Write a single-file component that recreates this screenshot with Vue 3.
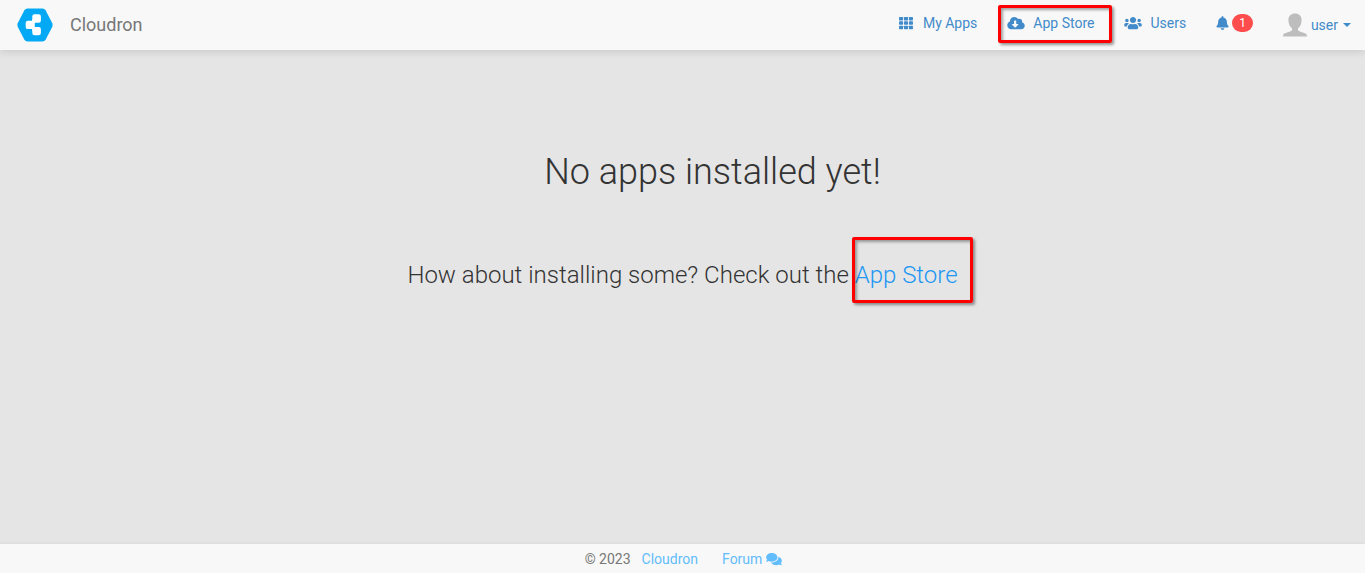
<script setup>
const cells = [0, 1, 2].flatMap((r) => [0, 1, 2].map((c) => ({ x: c * 181, y: 32 + r * 160 })))
</script>

<template>
  <div class="page">
    <header class="navbar">
      <a class="brand" href="#">
        <svg class="logo" viewBox="0 0 36 34" aria-hidden="true">
          <path fill="#03a9f4" d="M10.500 0.500H25.500Q27.500 0.500 28.600 2.200L35.300 15.300Q36 17 35.300 18.700L28.600 31.800Q27.500 33.500 25.500 33.500H10.500Q8.500 33.500 7.400 31.800L0.700 18.700Q0 17 0.700 15.300L7.400 2.200Q8.500 0.500 10.500 0.500Z" />
          <g fill="#fff">
            <rect x="15.300" y="6.300" width="8.600" height="8.400" rx="2.200" />
            <rect x="8.700" y="12.700" width="8.600" height="8.400" rx="2.200" />
            <rect x="15.300" y="18.900" width="8.600" height="8.400" rx="2.200" />
            <path d="M15.300 11H19.500L17.700 14.500V19.500L19.500 23H15.300Z" />
          </g>
        </svg>
        <span>Cloudron</span>
      </a>
      <nav class="menu">
        <a class="item" href="#apps">
          <svg class="icon" viewBox="0 0 512 512" aria-hidden="true">
            <rect v-for="(c, i) in cells" :key="i" :x="c.x" :y="c.y" width="149" height="128" rx="24" />
          </svg>
          <span>My Apps</span>
        </a>
        <a class="item marked" href="#appstore">
          <svg class="icon" viewBox="0 0 640 512" aria-hidden="true">
            <path d="M537.6 226.6c4.100-10.700 6.400-22.400 6.400-34.600 0-53-43-96-96-96-19.700 0-38.100 6-53.300 16.200C367 64.200 315.300 32 256 32c-88.400 0-160 71.600-160 160 0 2.700.1 5.400.2 8.100C40.200 219.800 0 273.200 0 336c0 79.500 64.500 144 144 144h368c70.700 0 128-57.300 128-128 0-61.900-44-113.600-102.400-125.400zm-132.900 88.700L299.300 420.700c-6.200 6.200-16.400 6.200-22.600 0L171.300 315.300c-10.100-10.100-2.900-27.300 11.300-27.300H248V176c0-8.800 7.200-16 16-16h48c8.800 0 16 7.200 16 16v112h65.400c14.200 0 21.400 17.200 11.300 27.300z" />
          </svg>
          <span>App Store</span>
        </a>
        <a class="item" href="#users">
          <svg class="icon" viewBox="0 0 640 512" aria-hidden="true">
            <path d="M96 224c35.300 0 64-28.700 64-64s-28.700-64-64-64-64 28.700-64 64 28.700 64 64 64zm448 0c35.300 0 64-28.700 64-64s-28.700-64-64-64-64 28.700-64 64 28.700 64 64 64zm32 32h-64c-17.600 0-33.500 7.100-45.100 18.600 40.300 22.100 68.900 62 75.100 109.400h66c17.700 0 32-14.300 32-32v-32c0-35.300-28.700-64-64-64zm-256 0c61.900 0 112-50.100 112-112S381.900 32 320 32 208 82.100 208 144s50.100 112 112 112zm76.800 32h-8.300c-20.800 10-43.900 16-68.500 16s-47.600-6-68.500-16h-8.300C179.600 288 128 339.600 128 403.200V432c0 26.500 21.500 48 48 48h288c26.500 0 48-21.500 48-48v-28.800c0-63.600-51.600-115.200-115.200-115.200zm-223.700-13.400C161.500 263.100 145.600 256 128 256H64c-35.300 0-64 28.700-64 64v32c0 17.700 14.300 32 32 32h65.900c6.300-47.400 34.900-87.300 75.200-109.400z" />
          </svg>
          <span>Users</span>
        </a>
        <a class="item alerts" href="#notifications" aria-label="Notifications: 1">
          <svg class="bell" viewBox="0 0 448 512" aria-hidden="true">
            <path d="M224 512c35.320 0 63.970-28.650 63.970-64H160.030c0 35.350 28.650 64 63.970 64zm215.390-149.710c-19.320-20.760-55.470-51.990-55.470-154.290 0-77.700-54.480-139.900-127.940-155.160V32c0-17.670-14.320-32-31.980-32s-31.980 14.330-31.980 32v20.840C118.560 68.100 64.080 130.300 64.080 208c0 102.300-36.150 133.530-55.470 154.290-6 6.450-8.660 14.160-8.610 21.710.11 16.400 12.980 32 32.100 32h383.800c19.120 0 32-15.600 32.100-32 .05-7.550-2.610-15.270-8.610-21.710z" />
          </svg>
          <span class="badge">1</span>
        </a>
        <button class="item account" type="button" aria-haspopup="true">
          <svg class="avatar" viewBox="0 0 24 24" aria-hidden="true">
            <path fill="#bdbdbd" d="M12 0.500C16 0.500 18.600 3 18.600 7C18.600 11 17 14 15 15.300V17C15.500 19 22.500 19.300 23.700 21.500L24 23.500H0L0.300 21.500C1.500 19.300 8.500 19 9 17V15.300C7 14 5.400 11 5.400 7C5.400 3 8 0.500 12 0.500Z" />
          </svg>
          <span>user</span>
          <span class="caret"></span>
        </button>
      </nav>
    </header>

    <main class="content">
      <h1>No apps installed yet!</h1>
      <h3>How about installing some? Check out the <a class="store" href="#appstore">App Store</a></h3>
    </main>

    <footer class="footer">
      <span>© 2023</span>
      <a class="home" href="#cloudron">Cloudron</a>
      <a class="forum" href="#forum">
        <span>Forum</span>
        <svg class="comments" viewBox="0 0 576 512" aria-hidden="true">
          <path d="M416 192c0-88.400-93.100-160-208-160S0 103.600 0 192c0 34.300 14.100 65.900 38 92-13.400 30.200-35.500 54.200-35.800 54.500-2.200 2.300-2.800 5.700-1.500 8.700S4.800 352 8 352c36.600 0 66.900-12.300 88.700-25 32.200 15.700 70.300 25 111.300 25 114.900 0 208-71.600 208-160zm122 220c23.900-26 38-57.700 38-92 0-66.900-53.500-124.200-129.300-148.100.9 6.600 1.300 13.300 1.300 20.100 0 105.900-107.700 192-240 192-10.800 0-21.300-.8-31.700-1.900C207.800 439.600 281.800 480 368 480c41 0 79.100-9.200 111.300-25 21.800 12.700 52.100 25 88.700 25 3.200 0 6.100-1.900 7.300-4.800 1.300-2.900.7-6.300-1.500-8.700-.3-.3-22.400-24.200-35.800-54.500z" />
        </svg>
      </a>
    </footer>
  </div>
</template>

<style>
body {
  margin: 0;
  background: #e5e5e5;
}
</style>

<style scoped>
.page {
  display: flex;
  flex-direction: column;
  min-height: 100vh;
  font-family: Roboto, "Liberation Sans", sans-serif;
  font-size: 14px;
  line-height: 20px;
  color: #333;
  background: #e5e5e5;
}
a {
  text-decoration: none;
}
.navbar {
  display: flex;
  justify-content: space-between;
  height: 50px;
  background: #f8f8f8;
  box-shadow: 0 2px 8px rgba(0, 0, 0, 0.12);
}
.brand {
  display: flex;
  align-items: center;
  gap: 17px;
  padding-left: 17px;
  font-size: 18px;
  color: #777;
}
.logo {
  width: 36px;
  height: 34px;
}
.menu {
  display: flex;
  align-items: center;
  padding-bottom: 4px;
}
.item {
  position: relative;
  display: flex;
  align-items: center;
  gap: 8px;
  padding: 0 15px;
  color: #428bca;
}
.item svg {
  fill: currentColor;
}
.icon {
  width: 18px;
  height: 14px;
}
.marked::after,
.store::after {
  content: "";
  position: absolute;
  border: 3px solid #f00;
  border-radius: 2px;
  box-shadow: 2px 2px 3px rgba(0, 0, 0, 0.4), inset 2px 2px 3px rgba(0, 0, 0, 0.35);
  pointer-events: none;
}
.marked::after {
  inset: -8px -3px -10px 6px;
}
.alerts {
  gap: 3px;
}
.bell {
  width: 13px;
  height: 14px;
}
.badge {
  padding: 0 7px;
  border-radius: 9px;
  font-size: 12px;
  line-height: 18px;
  color: #fff;
  background: #ff4c4c;
}
.account {
  gap: 4px;
  padding: 3px 14px 0 15px;
  border: 0;
  font: inherit;
  background: none;
}
.avatar {
  width: 24px;
  height: 24px;
}
.caret {
  margin-left: 1px;
  border-top: 4px solid;
  border-right: 4px solid transparent;
  border-left: 4px solid transparent;
}
.content {
  flex: 1;
  padding-top: 102px;
  text-align: center;
}
h1,
h3 {
  margin: 0;
  font-weight: 300;
}
h1 {
  padding-left: 60px;
  font-size: 36px;
  line-height: 40px;
}
h3 {
  margin-top: 69px;
  font-size: 24px;
  line-height: 28px;
}
.store {
  position: relative;
  color: #2196f3;
}
.store::after {
  inset: -24px -15px -14px -3px;
}
.footer {
  display: flex;
  justify-content: center;
  align-items: center;
  height: 29px;
  padding-left: 2px;
  color: #777;
  background: #f8f8f8;
  box-shadow: 0 -1px 3px rgba(0, 0, 0, 0.05);
}
.footer a {
  color: #62bdfc;
}
.home {
  margin: 0 24px 0 11px;
}
.forum {
  display: flex;
  align-items: center;
  gap: 4px;
}
.comments {
  width: 16px;
  height: 14px;
  fill: currentColor;
}
</style>
